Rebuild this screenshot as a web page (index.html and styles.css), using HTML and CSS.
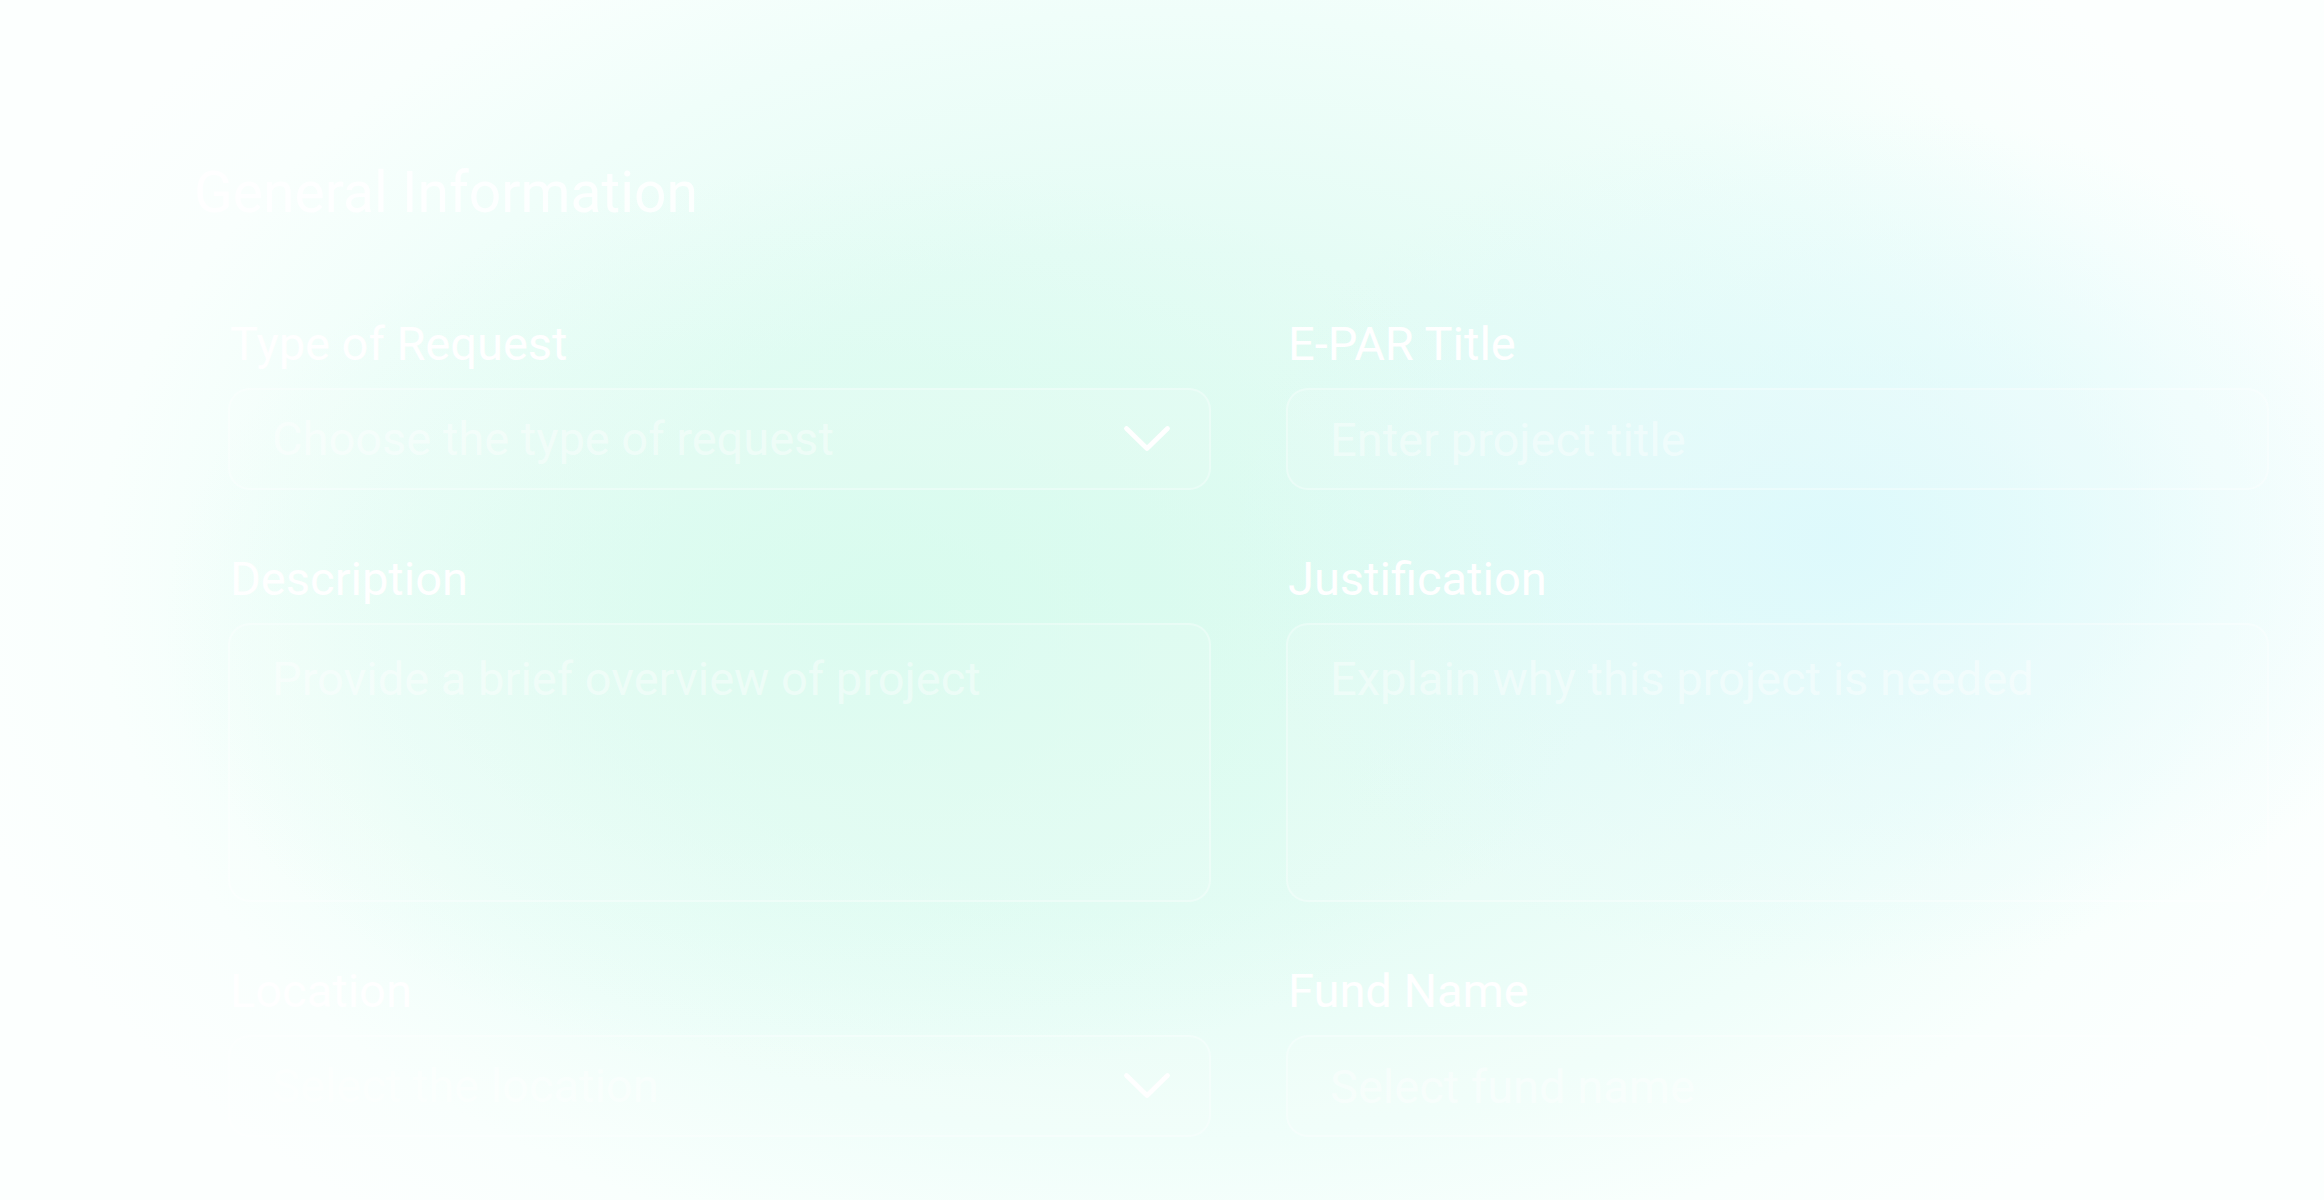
FILE: index.html
```html
<!DOCTYPE html>
<html lang="en">
<head>
<meta charset="utf-8">
<title>General Information</title>
<link rel="stylesheet" href="styles.css">
</head>
<body>
<main class="page">
  <h1 class="title">General Information</h1>
  <form class="grid">
    <div class="field">
      <label class="label">Type of Request</label>
      <div class="control select">
        <span class="placeholder">Choose the type of request</span>
        <svg class="chev" width="52" height="30" viewBox="0 0 52 30"><polyline points="5.5,4.5 26,24.5 46.5,4.5" fill="none" stroke="#ffffff" stroke-width="4.8" stroke-linecap="round" stroke-linejoin="round"/></svg>
      </div>
    </div>
    <div class="field">
      <label class="label">E-PAR Title</label>
      <input class="control input" type="text" placeholder="Enter project title">
    </div>
    <div class="field">
      <label class="label">Description</label>
      <textarea class="control area" placeholder="Provide a brief overview of project"></textarea>
    </div>
    <div class="field">
      <label class="label">Justification</label>
      <textarea class="control area" placeholder="Explain why this project is needed"></textarea>
    </div>
    <div class="field">
      <label class="label">Location</label>
      <div class="control select">
        <span class="placeholder">Select the location</span>
        <svg class="chev" width="52" height="30" viewBox="0 0 52 30"><polyline points="5.5,4.5 26,24.5 46.5,4.5" fill="none" stroke="#ffffff" stroke-width="4.8" stroke-linecap="round" stroke-linejoin="round"/></svg>
      </div>
    </div>
    <div class="field">
      <label class="label">Fund Name</label>
      <input class="control input" type="text" placeholder="Select fund name">
    </div>
  </form>
</main>
</body>
</html>
```
FILE: styles.css
```css
html, body {
  margin: 0;
  padding: 0;
}

body {
  width: 2324px;
  height: 1200px;
  overflow: hidden;
  font-family: Roboto, "Liberation Sans", Arial, sans-serif;
  background-color: #fbfffd;
  background-image:
    radial-gradient(ellipse 720px 460px at 38% 52%, rgba(213, 251, 236, 0.75), rgba(213, 251, 236, 0) 100%),
    radial-gradient(ellipse 620px 430px at 79% 45%, rgba(221, 249, 252, 0.95), rgba(221, 249, 252, 0) 100%),
    radial-gradient(ellipse 1240px 830px at 50% 48%, #dffbf2 0%, #e5fcf5 40%, #f0fefa 68%, #f9fffd 86%, #fcfffe 100%);
}

.page {
  padding: 160px 55px 0 194px;
  box-sizing: border-box;
}

.title {
  margin: 0;
  font-size: 57px;
  line-height: 66px;
  font-weight: 400;
  color: rgba(255, 255, 255, 0.85);
}

.grid {
  margin: 91px 0 0 34px;
  display: grid;
  grid-template-columns: 983px 983px;
  column-gap: 75px;
  row-gap: 62px;
}

.field {
  display: flex;
  flex-direction: column;
}

.label {
  display: block;
  font-size: 47px;
  line-height: 54px;
  color: #ffffff;
  margin-bottom: 17px;
  padding-left: 2px;
}

.control {
  box-sizing: border-box;
  width: 100%;
  margin: 0;
  border: 2px solid rgba(255, 255, 255, 0.3);
  border-radius: 22px;
  background: rgba(255, 255, 255, 0.12);
  font-family: Roboto, "Liberation Sans", Arial, sans-serif;
  font-size: 47px;
  line-height: 54px;
  color: #ffffff;
  outline: none;
}

.input {
  height: 102px;
  padding: 0 40px 0 42px;
}

.select {
  height: 102px;
  padding: 0 36px 0 42px;
  display: flex;
  align-items: center;
  justify-content: space-between;
}

.placeholder {
  color: rgba(255, 255, 255, 0.45);
}

.chev {
  display: block;
  flex: none;
}

.area {
  height: 279px;
  padding: 27px 40px 27px 42px;
  resize: none;
  display: block;
}

.control::placeholder {
  color: rgba(255, 255, 255, 0.45);
  opacity: 1;
}
```
